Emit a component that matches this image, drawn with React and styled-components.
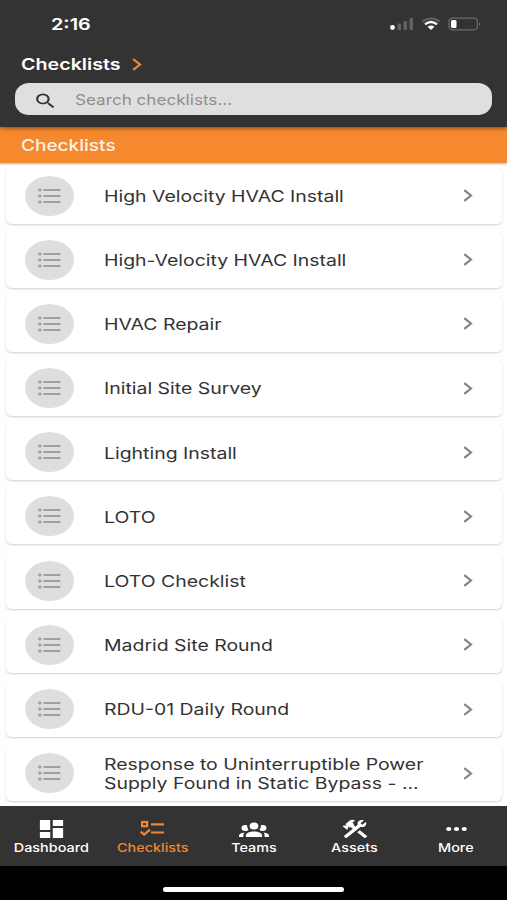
import React from "react";
import styled, { createGlobalStyle } from "styled-components";
import { MdDashboard, MdFormatListBulleted, MdMoreHoriz, MdSearch } from "react-icons/md";

const GlobalStyle = createGlobalStyle`
  * { box-sizing: border-box; }
  body { margin: 0; background: #fff; font-family: Inter, "Liberation Sans", sans-serif; }
`;

const Screen = styled.div`
  width: 507px;
  height: 900px;
  display: flex;
  flex-direction: column;
  overflow: hidden;
  background: #fefefe;
`;

const WideText = styled.span`
  display: inline-block;
  white-space: nowrap;
  transform: scaleX(${(p) => p.$stretch || 1.2});
  transform-origin: ${(p) => p.$origin || "left"} center;
`;

const Header = styled.header`
  flex: none;
  height: 127px;
  background: #333;
  color: #fff;
  display: flex;
  flex-direction: column;
  position: relative;
  box-shadow: 0 1px 4px rgba(0, 0, 0, 0.5);
`;

const StatusBar = styled.div`
  height: 47px;
  padding: 0 26px 0 51px;
  display: flex;
  align-items: center;
  justify-content: space-between;
  font-size: 16.5px;
  font-weight: 600;
`;

const StatusIcons = styled.svg`
  width: 92px;
  height: 14px;
`;

const Breadcrumb = styled.div`
  height: 36px;
  padding: 0 0 2px 21px;
  display: flex;
  align-items: center;
  font-size: 16px;
  font-weight: 600;
`;

const CrumbLabel = styled.div`
  width: 111px;
`;

const SearchBox = styled.div`
  height: 32px;
  margin: 0 15px;
  border-radius: 14px / 13px;
  background: #dfdfdf;
  display: flex;
  align-items: center;
  padding-left: 18px;
  color: #8e8e8e;
  font-size: 14.5px;
`;

const SearchIcon = styled(MdSearch)`
  width: 25px;
  height: 20px;
  margin: 3px 16.5px 0 0;
  color: #333;
`;

const SectionTitle = styled.div`
  flex: none;
  height: 36px;
  padding-left: 21px;
  display: flex;
  align-items: center;
  background: #f6882e;
  color: #fdf3e9;
  font-size: 16px;
  font-weight: 500;
  box-shadow: 0 1px 2px rgba(0, 0, 0, 0.3);
`;

const List = styled.main`
  height: 643px;
  padding: 4.5px 5px 0 6px;
  display: flex;
  flex-direction: column;
  gap: 8.2px;
`;

const Card = styled.div`
  flex: none;
  height: 56px;
  border-radius: 5px;
  background: #fff;
  box-shadow: 0 1px 2px rgba(0, 0, 0, 0.18);
  display: flex;
  align-items: center;
  padding: 0 29px 0 19px;
`;

const Badge = styled.div`
  width: 49px;
  height: 40px;
  margin-right: 29.5px;
  border-radius: 50%;
  background: #dedede;
  display: flex;
  align-items: center;
  justify-content: center;
`;

const ListIcon = styled(MdFormatListBulleted)`
  width: 29px;
  height: 24px;
  color: #a0a0a0;
`;

const CardText = styled.div`
  flex: 1;
  display: flex;
  flex-direction: column;
  align-items: flex-start;
  padding-top: 1.5px;
  font-size: 16px;
  line-height: 19px;
  color: #333;
`;

const ChevronSvg = styled.svg`
  flex: none;
  width: 10px;
  height: 13px;
  fill: none;
  stroke: ${(p) => p.$color};
  stroke-width: 2.2;
`;

const NavBar = styled.nav`
  position: relative;
  flex: none;
  height: 60px;
  background: #333;
  display: grid;
  grid-template-columns: repeat(5, 101.2px);
  padding-left: 0.7px;
`;

const NavItem = styled.div`
  display: flex;
  flex-direction: column;
  align-items: center;
  padding-top: 11px;
  color: ${(p) => (p.$active ? "#ef8733" : "#fff")};
  font-size: 12px;
  line-height: 14px;
  font-weight: 500;
  svg {
    width: ${(p) => p.$w}px;
    height: 24px;
  }
`;

const HomeArea = styled.footer`
  flex: none;
  height: 34px;
  background: #000;
  display: flex;
  justify-content: center;
  padding-top: 21px;
`;

const HomeIndicator = styled.div`
  width: 181px;
  height: 5px;
  border-radius: 3px;
  background: #fff;
`;

const stretchIcon = { preserveAspectRatio: "none" };

const Chevron = ({ color }) => (
  <ChevronSvg viewBox="0 0 10 13" $color={color}>
    <path d="M1.2 1.2 L8 6.5 L1.2 11.8" />
  </ChevronSvg>
);

const ChecklistIcon = () => (
  <svg viewBox="0 0 28 24" fill="none" stroke="currentColor">
    <rect x="4.1" y="5" width="5" height="4.2" strokeWidth="2.2" />
    <path d="M13 7.3H26M13 15.5H26" strokeWidth="2.2" />
    <path d="M2.6 14.6L6.2 17.6L12 12.6" strokeWidth="2.2" />
  </svg>
);

const TeamsIcon = () => (
  <svg viewBox="0 0 24 24" fill="currentColor" {...stretchIcon}>
    <path d="M12 5.5A3.5 3.5 0 0 1 15.5 9 3.5 3.5 0 0 1 12 12.5 3.5 3.5 0 0 1 8.5 9 3.5 3.5 0 0 1 12 5.5M5 8C5.56 8 6.08 8.15 6.53 8.42 6.38 9.85 6.8 11.27 7.66 12.38 7.16 13.34 6.16 14 5 14A3 3 0 0 1 2 11 3 3 0 0 1 5 8M19 8A3 3 0 0 1 22 11 3 3 0 0 1 19 14C17.84 14 16.84 13.34 16.34 12.38 17.2 11.27 17.62 9.85 17.47 8.42 17.92 8.15 18.44 8 19 8M5.5 18.25C5.5 16.18 8.41 14.5 12 14.5S18.5 16.18 18.5 18.25V20H5.5V18.25M0 20V18.5C0 17.11 1.89 15.94 4.45 15.6 3.86 16.28 3.5 17.22 3.5 18.25V20H0M24 20H20.5V18.25C20.5 17.22 20.14 16.28 19.55 15.6 22.11 15.94 24 17.11 24 18.5V20Z" />
  </svg>
);

const ToolsIcon = () => (
  <svg viewBox="0 0 24 24" fill="currentColor" {...stretchIcon}>
    <path d="M13.78 15.3L19.78 21.3L21.89 19.14L15.89 13.14L13.78 15.3M17.5 10.1C17.11 10.1 16.69 10.05 16.36 9.91L4.97 21.25L2.86 19.14L10.27 11.74L8.5 9.96L7.78 10.66L6.33 9.25V12.11L5.63 12.81L2.11 9.25L2.81 8.55H5.62L4.22 7.14L7.78 3.58C8.95 2.41 10.83 2.41 12 3.58L9.89 5.74L11.3 7.14L10.59 7.85L12.38 9.63L14.2 7.75C14.06 7.42 14 7 14 6.63C14 4.66 15.56 3.11 17.5 3.11C18.09 3.11 18.61 3.25 19.08 3.53L16.41 6.2L17.91 7.7L20.58 5.03C20.86 5.5 21 6 21 6.63C21 8.55 19.45 10.1 17.5 10.1Z" />
  </svg>
);

const ROWS = [
  { lines: ["High Velocity HVAC Install"] },
  { lines: ["High-Velocity HVAC Install"] },
  { lines: ["HVAC Repair"] },
  { lines: ["Initial Site Survey"] },
  { lines: ["Lighting Install"] },
  { lines: ["LOTO"] },
  { lines: ["LOTO Checklist"] },
  { lines: ["Madrid Site Round"] },
  { lines: ["RDU-01 Daily Round"] },
  { lines: ["Response to Uninterruptible Power", "Supply Found in Static Bypass - ..."] },
];

const NAV = [
  { label: "Dashboard", icon: <MdDashboard {...stretchIcon} />, w: 31 },
  { label: "Checklists", icon: <ChecklistIcon />, w: 28, active: true },
  { label: "Teams", icon: <TeamsIcon />, w: 30 },
  { label: "Assets", icon: <ToolsIcon />, w: 30 },
  { label: "More", icon: <MdMoreHoriz {...stretchIcon} />, w: 31 },
];

export default function App() {
  return (
    <>
      <GlobalStyle />
      <Screen>
        <Header>
          <StatusBar>
            <WideText>2:16</WideText>
            <StatusIcons viewBox="0 0 92 14">
              <circle cx="3.5" cy="10.5" r="2.4" fill="#fff" />
              <g fill="#626262">
                <rect x="8.5" y="6.5" width="3.5" height="6.5" rx="1" />
                <rect x="14.5" y="4" width="3.5" height="9" rx="1" />
                <rect x="20.5" y="1" width="3.5" height="12" rx="1" />
              </g>
              <g fill="none">
                <path d="M33.5 4.5 Q42 -1.5 50.5 4.5" stroke="#626262" strokeWidth="2.2" />
                <path d="M36 7.3 Q42 2.8 48 7.3" stroke="#fff" strokeWidth="2.3" />
              </g>
              <path d="M38.5 9.8 Q42 7.3 45.5 9.8 L42 13z" fill="#fff" />
              <rect x="60" y="1.2" width="28.4" height="11.6" rx="3.5" fill="none" stroke="#6c6c6c" strokeWidth="1.2" />
              <rect x="62" y="3" width="5.5" height="8" rx="1.5" fill="#fff" />
              <path d="M90 5 Q92 7 90 9z" fill="#6c6c6c" />
            </StatusIcons>
          </StatusBar>
          <Breadcrumb>
            <CrumbLabel><WideText $stretch={1.23}>Checklists</WideText></CrumbLabel>
            <Chevron color="#ef8733" />
          </Breadcrumb>
          <SearchBox>
            <SearchIcon {...stretchIcon} />
            <WideText $stretch={1.18}>Search checklists...</WideText>
          </SearchBox>
        </Header>
        <SectionTitle><WideText $stretch={1.19}>Checklists</WideText></SectionTitle>
        <List>
          {ROWS.map((row) => (
            <Card key={row.lines[0]}>
              <Badge><ListIcon {...stretchIcon} /></Badge>
              <CardText>
                {row.lines.map((line) => <WideText key={line} $stretch={1.215}>{line}</WideText>)}
              </CardText>
              <Chevron color="#858585" />
            </Card>
          ))}
        </List>
        <NavBar>
          {NAV.map((item) => (
            <NavItem key={item.label} $w={item.w} $active={item.active}>
              {item.icon}
              <WideText $origin="center">{item.label}</WideText>
            </NavItem>
          ))}
        </NavBar>
        <HomeArea><HomeIndicator /></HomeArea>
      </Screen>
    </>
  );
}
